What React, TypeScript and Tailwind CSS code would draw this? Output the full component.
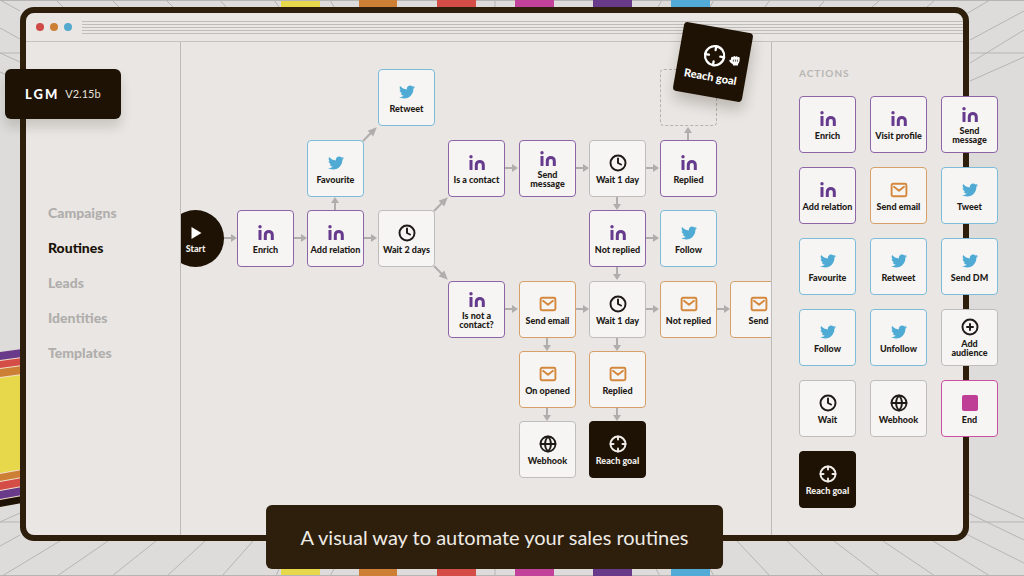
import React from "react";
import { CirclePlus, Clock, Crosshair, Globe } from "lucide-react";
import { FaTwitter } from "react-icons/fa";

type Kind =
  | "linkedin"
  | "twitter"
  | "mail"
  | "wait"
  | "webhook"
  | "audience"
  | "end"
  | "goal";

const kindStyles: Record<Kind, string> = {
  linkedin: "border-[#8d64a6] bg-[#f6f5f4] text-[#1e1a15]",
  twitter: "border-[#7dbcd9] bg-[#f6f5f4] text-[#1e1a15]",
  mail: "border-[#d6a068] bg-[#f6f5f4] text-[#1e1a15]",
  wait: "border-[#bfbdbb] bg-[#f6f5f4] text-[#1e1a15]",
  webhook: "border-[#bfbdbb] bg-[#f6f5f4] text-[#1e1a15]",
  audience: "border-[#bfbdbb] bg-[#f6f5f4] text-[#1e1a15]",
  end: "border-[#c9519f] bg-[#f6f5f4] text-[#1e1a15]",
  goal: "border-[#1e1204] bg-[#1e1204] text-[#f1eeea]",
};

const LinkedinIcon = () => (
  <svg width="16" height="15" viewBox="0 0 16 15" fill="none">
    <circle cx="2" cy="1.8" r="1.7" fill="#663a8c" />
    <rect x="0.5" y="5" width="3" height="10" rx="0.4" fill="#663a8c" />
    <path
      d="M7.3 15V9.9a3.5 3.5 0 0 1 7 0V15"
      stroke="#663a8c"
      strokeWidth="3"
    />
  </svg>
);

const MailIcon = () => (
  <svg
    width="18"
    height="16"
    viewBox="0 0 18 16"
    fill="none"
    stroke="#d4883c"
    strokeWidth="1.9"
    strokeLinecap="round"
    strokeLinejoin="round"
  >
    <rect x="1.6" y="1.8" width="14.8" height="12.4" rx="1.4" />
    <path d="M4 4.8 9 8.8l5-4" />
  </svg>
);

const KindIcon = ({ kind }: { kind: Kind }) => {
  switch (kind) {
    case "linkedin":
      return <LinkedinIcon />;
    case "twitter":
      return <FaTwitter size={16} className="text-[#4fabd4]" />;
    case "mail":
      return <MailIcon />;
    case "wait":
      return <Clock size={18} strokeWidth={2.6} />;
    case "webhook":
      return <Globe size={18} strokeWidth={2.4} />;
    case "audience":
      return <CirclePlus size={18} strokeWidth={2.6} />;
    case "end":
      return <span className="size-4 rounded-xs bg-[#c03f96]" />;
    case "goal":
      return <Crosshair size={18} strokeWidth={2.6} />;
  }
};

const Tile = ({ kind, label }: { kind: Kind; label: string }) => (
  <button
    type="button"
    className={`flex size-[57px] flex-col items-center justify-center gap-[3px] rounded-sm border text-center text-[9px] leading-[9px] font-black ${kindStyles[kind]}`}
  >
    <span className="flex h-[18px] items-center">
      <KindIcon kind={kind} />
    </span>
    <span className="whitespace-pre">{label}</span>
  </button>
);

// Canvas grid: left and top edges of every column and row
const COLS = [-14, 56, 126, 197, 267, 338, 408, 479, 549];
const ROWS = [27, 98, 168, 239, 309, 379];

const nodes: { col: number; row: number; kind: Kind; label: string }[] = [
  { col: 3, row: 0, kind: "twitter", label: "Retweet" },
  { col: 2, row: 1, kind: "twitter", label: "Favourite" },
  { col: 4, row: 1, kind: "linkedin", label: "Is a contact" },
  { col: 5, row: 1, kind: "linkedin", label: "Send\nmessage" },
  { col: 6, row: 1, kind: "wait", label: "Wait 1 day" },
  { col: 7, row: 1, kind: "linkedin", label: "Replied" },
  { col: 1, row: 2, kind: "linkedin", label: "Enrich" },
  { col: 2, row: 2, kind: "linkedin", label: "Add relation" },
  { col: 3, row: 2, kind: "wait", label: "Wait 2 days" },
  { col: 6, row: 2, kind: "linkedin", label: "Not replied" },
  { col: 7, row: 2, kind: "twitter", label: "Follow" },
  { col: 4, row: 3, kind: "linkedin", label: "Is not a\ncontact?" },
  { col: 5, row: 3, kind: "mail", label: "Send email" },
  { col: 6, row: 3, kind: "wait", label: "Wait 1 day" },
  { col: 7, row: 3, kind: "mail", label: "Not replied" },
  { col: 8, row: 3, kind: "mail", label: "Send" },
  { col: 5, row: 4, kind: "mail", label: "On opened" },
  { col: 6, row: 4, kind: "mail", label: "Replied" },
  { col: 5, row: 5, kind: "webhook", label: "Webhook" },
  { col: 6, row: 5, kind: "goal", label: "Reach goal" },
];

// Each arrow leaves the node at [col, row] in the given direction
type Direction = "right" | "up" | "down" | "upRight" | "downRight";

const arrows: [number, number, Direction][] = [
  [0, 2, "right"],
  [1, 2, "right"],
  [2, 2, "right"],
  [2, 2, "up"],
  [2, 1, "upRight"],
  [3, 2, "upRight"],
  [3, 2, "downRight"],
  [4, 1, "right"],
  [5, 1, "right"],
  [6, 1, "right"],
  [6, 1, "down"],
  [7, 1, "up"],
  [6, 2, "right"],
  [6, 2, "down"],
  [4, 3, "right"],
  [5, 3, "right"],
  [6, 3, "right"],
  [7, 3, "right"],
  [5, 3, "down"],
  [6, 3, "down"],
  [5, 4, "down"],
  [6, 4, "down"],
];

const arrowTransform = (col: number, row: number, direction: Direction) => {
  const x = COLS[col];
  const y = ROWS[row];
  switch (direction) {
    case "right":
      return `translate(${x + 57} ${y + 28})`;
    case "up":
      return `translate(${x + 28} ${y}) rotate(-90)`;
    case "down":
      return `translate(${x + 28} ${y + 57}) rotate(90)`;
    case "upRight":
      return `translate(${x + 56} ${y + 1}) rotate(-45) scale(1.5 1)`;
    case "downRight":
      return `translate(${x + 56} ${y + 56}) rotate(45) scale(1.5 1)`;
  }
};

const Canvas = () => (
  <main className="relative min-w-0 flex-1">
    <div className="absolute inset-0 overflow-hidden">
      <svg className="absolute inset-0 size-full" fill="#b0aeac">
        {arrows.map(([col, row, direction]) => (
          <path
            key={`${col}-${row}-${direction}`}
            transform={arrowTransform(col, row, direction)}
            d="M0-1H7V-4L13 0 7 4V1H0Z"
          />
        ))}
      </svg>
      <button
        type="button"
        className="absolute flex size-[57px] flex-col items-center justify-center gap-1 rounded-full bg-[#1e1204] pt-0.5 text-[9px] leading-[9px] font-black text-[#f1eeea]"
        style={{ left: COLS[0], top: ROWS[2] }}
      >
        <svg width="12" height="14" viewBox="0 0 12 14" fill="#fff">
          <path d="M1.5 1 11.5 7 1.5 13Z" />
        </svg>
        Start
      </button>
      <div
        className="absolute size-[57px] rounded-sm border border-dashed border-[#b5b3b0]"
        style={{ left: COLS[7], top: ROWS[0] }}
      />
      {nodes.map((node) => (
        <div
          key={`${node.col}-${node.row}`}
          className="absolute"
          style={{ left: COLS[node.col], top: ROWS[node.row] }}
        >
          <Tile kind={node.kind} label={node.label} />
        </div>
      ))}
    </div>
    {/* card being dragged to the empty slot */}
    <div className="absolute -top-[15px] left-[497px] size-[70px]">
      <button
        type="button"
        className="flex size-full rotate-10 flex-col items-center justify-center gap-1 rounded-sm bg-[#1e1204] pt-0.5 text-[11px] leading-3 font-black text-white shadow-[2px_8px_14px_rgba(30,18,4,0.22)]"
      >
        <Crosshair size={23} strokeWidth={2.4} />
        Reach goal
      </button>
      <svg
        className="absolute top-[27px] left-[50px]"
        width="13"
        height="13"
        viewBox="0 0 13 13"
      >
        <path
          d="M3 4.2C3 2.6 4.7 2.2 5.2 3.2 5.4 1.8 7.2 1.8 7.5 3 8 2 9.6 2.2 9.7 3.4c.7-.8 2-.4 2 .9 0 2.8-.4 4.4-1.7 5.7v1.4H5V10.5C3.8 9.6 2.2 8.4 1.4 7.2.9 6.2 2 5.4 3 6Z"
          fill="#fff"
        />
        <path
          d="M5.4 5.5v2.2M7.4 5.5v2.2M9.4 5.5v2.2"
          stroke="#1e1204"
          strokeWidth="0.7"
        />
      </svg>
    </div>
  </main>
);

const menu = ["Campaigns", "Routines", "Leads", "Identities", "Templates"];

const Sidebar = () => (
  <nav className="w-[155px] shrink-0 border-r border-[#bdbab7] pt-[161px] pl-[22px]">
    <ul className="flex flex-col gap-[15px] text-[14px] leading-5 font-black">
      {menu.map((item) => (
        <li key={item}>
          <a
            href="#"
            className={item === "Routines" ? "text-[#1a1208]" : "text-[#b0aeac]"}
          >
            {item}
          </a>
        </li>
      ))}
    </ul>
  </nav>
);

const actions: { kind: Kind; label: string }[] = [
  { kind: "linkedin", label: "Enrich" },
  { kind: "linkedin", label: "Visit profile" },
  { kind: "linkedin", label: "Send\nmessage" },
  { kind: "linkedin", label: "Add relation" },
  { kind: "mail", label: "Send email" },
  { kind: "twitter", label: "Tweet" },
  { kind: "twitter", label: "Favourite" },
  { kind: "twitter", label: "Retweet" },
  { kind: "twitter", label: "Send DM" },
  { kind: "twitter", label: "Follow" },
  { kind: "twitter", label: "Unfollow" },
  { kind: "audience", label: "Add\naudience" },
  { kind: "wait", label: "Wait" },
  { kind: "webhook", label: "Webhook" },
  { kind: "end", label: "End" },
  { kind: "goal", label: "Reach goal" },
];

const ActionsPanel = () => (
  <aside className="w-48 shrink-0 border-l border-[#bdbab7] pt-[23px] pl-[27px]">
    <h2 className="text-[10px] leading-4 font-bold tracking-widest text-[#b8b6b3]">
      ACTIONS
    </h2>
    <div className="mt-[15px] grid w-max grid-cols-3 gap-[14px]">
      {actions.map((action) => (
        <Tile key={action.label} kind={action.kind} label={action.label} />
      ))}
    </div>
  </aside>
);

const TitleBar = () => (
  <div className="flex h-[29px] shrink-0 items-center gap-[10px] border-b border-[#c4c1be] pl-[10px]">
    <div className="flex gap-1.5">
      <span className="size-2 rounded-full bg-[#cf4b45]" />
      <span className="size-2 rounded-full bg-[#cc7f35]" />
      <span className="size-2 rounded-full bg-[#55a9cf]" />
    </div>
    <div className="flex flex-1 flex-col gap-0.5">
      <span className="h-px bg-[#bfbcb9]" />
      <span className="h-px bg-[#bfbcb9]" />
      <span className="h-px bg-[#bfbcb9]" />
      <span className="h-px bg-[#bfbcb9]" />
      <span className="h-px bg-[#bfbcb9]" />
    </div>
  </div>
);

const Backdrop = () => (
  <svg
    className="absolute inset-0 size-full"
    viewBox="0 0 1024 576"
    preserveAspectRatio="none"
  >
    {/* floor and ceiling seams */}
    <path
      d="M0 .5H1024M0 575.5H1024M0 53H20M970 53h54M0 522H20M970 522h54M495 0V8M495 560v16
      M0 0 20 11M0 28 20 39M0 53 20 62M0 72 20 81M56 0l7 7M112 0l7 7M166 0l7 7M220 0l6 7M274 0l5 7M330 0l4 7
      M662 0l-4 7M714 0l-4 7M770 0l-5 7M825 0l-6 7M880 0l-8 7M935 0l-8 7M990 0 966 14
      M1024 11 970 40M1024 30 970 63M1024 57 970 81
      M966 493 1024 519M966 512 1024 540M966 534 1024 563M933 541l57 35M883 541l52 35M834 541l46 35M787 541l37 35M737 541l33 35
      M253 541l-31 35M205 541l-38 35M156 541l-44 35M108 541l-51 35M60 541 2 576M20 535 0 546M20 513 0 522
      M279 569l-3 7M334 569l-4 7M656 569l4 7M710 569l4 7"
      fill="none"
      stroke="#b7b5b3"
    />
    <path d="M281 1h39v6h-39zM281 569h39v6h-39z" fill="#e6d84a" />
    <path d="M359 0h38v7h-38zM359 569h38v7h-38z" fill="#cd7f35" />
    <path d="M437 0h39v7h-39zM437 569h39v7h-39z" fill="#d44d46" />
    <path d="M515 0h39v7h-39zM515 569h39v7h-39z" fill="#c2419a" />
    <path d="M593 0h39v7h-39zM593 569h39v7h-39z" fill="#6a3a8a" />
    <path d="M671 0h39v7h-39zM671 569h39v7h-39z" fill="#52abd6" />
    {/* rainbow on the left wall */}
    <path d="M0 352 22 349V501L0 507Z" fill="#f0dfc9" />
    <path d="M0 352 22 349v8L0 360ZM0 491l22-4v8L0 499Z" fill="#6a3a8a" />
    <path d="M0 361l22-3v7L0 368ZM0 482l22-4v8L0 490Z" fill="#d44d46" />
    <path d="M0 369l22-3v8L0 377ZM0 474l22-4v7L0 481Z" fill="#cd7f35" />
    <path d="M0 378l22-3v94L0 473Z" fill="#e6d84a" />
    <path d="M0 500l22-4v7L0 507Z" fill="#1e1204" />
  </svg>
);

const App = () => {
  return (
    <div className="relative flex min-h-screen flex-col overflow-hidden bg-[#dddcda] pt-[7px] pr-[55px] pb-[35px] pl-5 font-['Lato',sans-serif]">
      <Backdrop />
      <div className="relative flex min-h-[534px] flex-1 flex-col rounded-[14px] border-6 border-[#2d1f0c] bg-[#e9e6e3]">
        <TitleBar />
        <div className="flex flex-1">
          <Sidebar />
          <Canvas />
          <ActionsPanel />
        </div>
        <div className="absolute top-14 -left-[21px] flex items-center gap-1.5 rounded-md bg-[#1e1204] px-5 py-[15px] leading-5 whitespace-nowrap shadow-[0_8px_12px_rgba(30,18,4,0.15)]">
          <strong className="text-[13px] font-black tracking-[2px] text-white">
            LGM
          </strong>
          <span className="text-[11px] text-[#e4e0db]">V2.15b</span>
        </div>
        <p className="absolute -bottom-[34px] left-1/2 -translate-x-1/2 rounded-md bg-[#2d1f0c] px-[35px] py-4 text-[20px] leading-8 whitespace-nowrap text-[#efebe6]">
          A visual way to automate your sales routines
        </p>
      </div>
    </div>
  );
};

export default App;
